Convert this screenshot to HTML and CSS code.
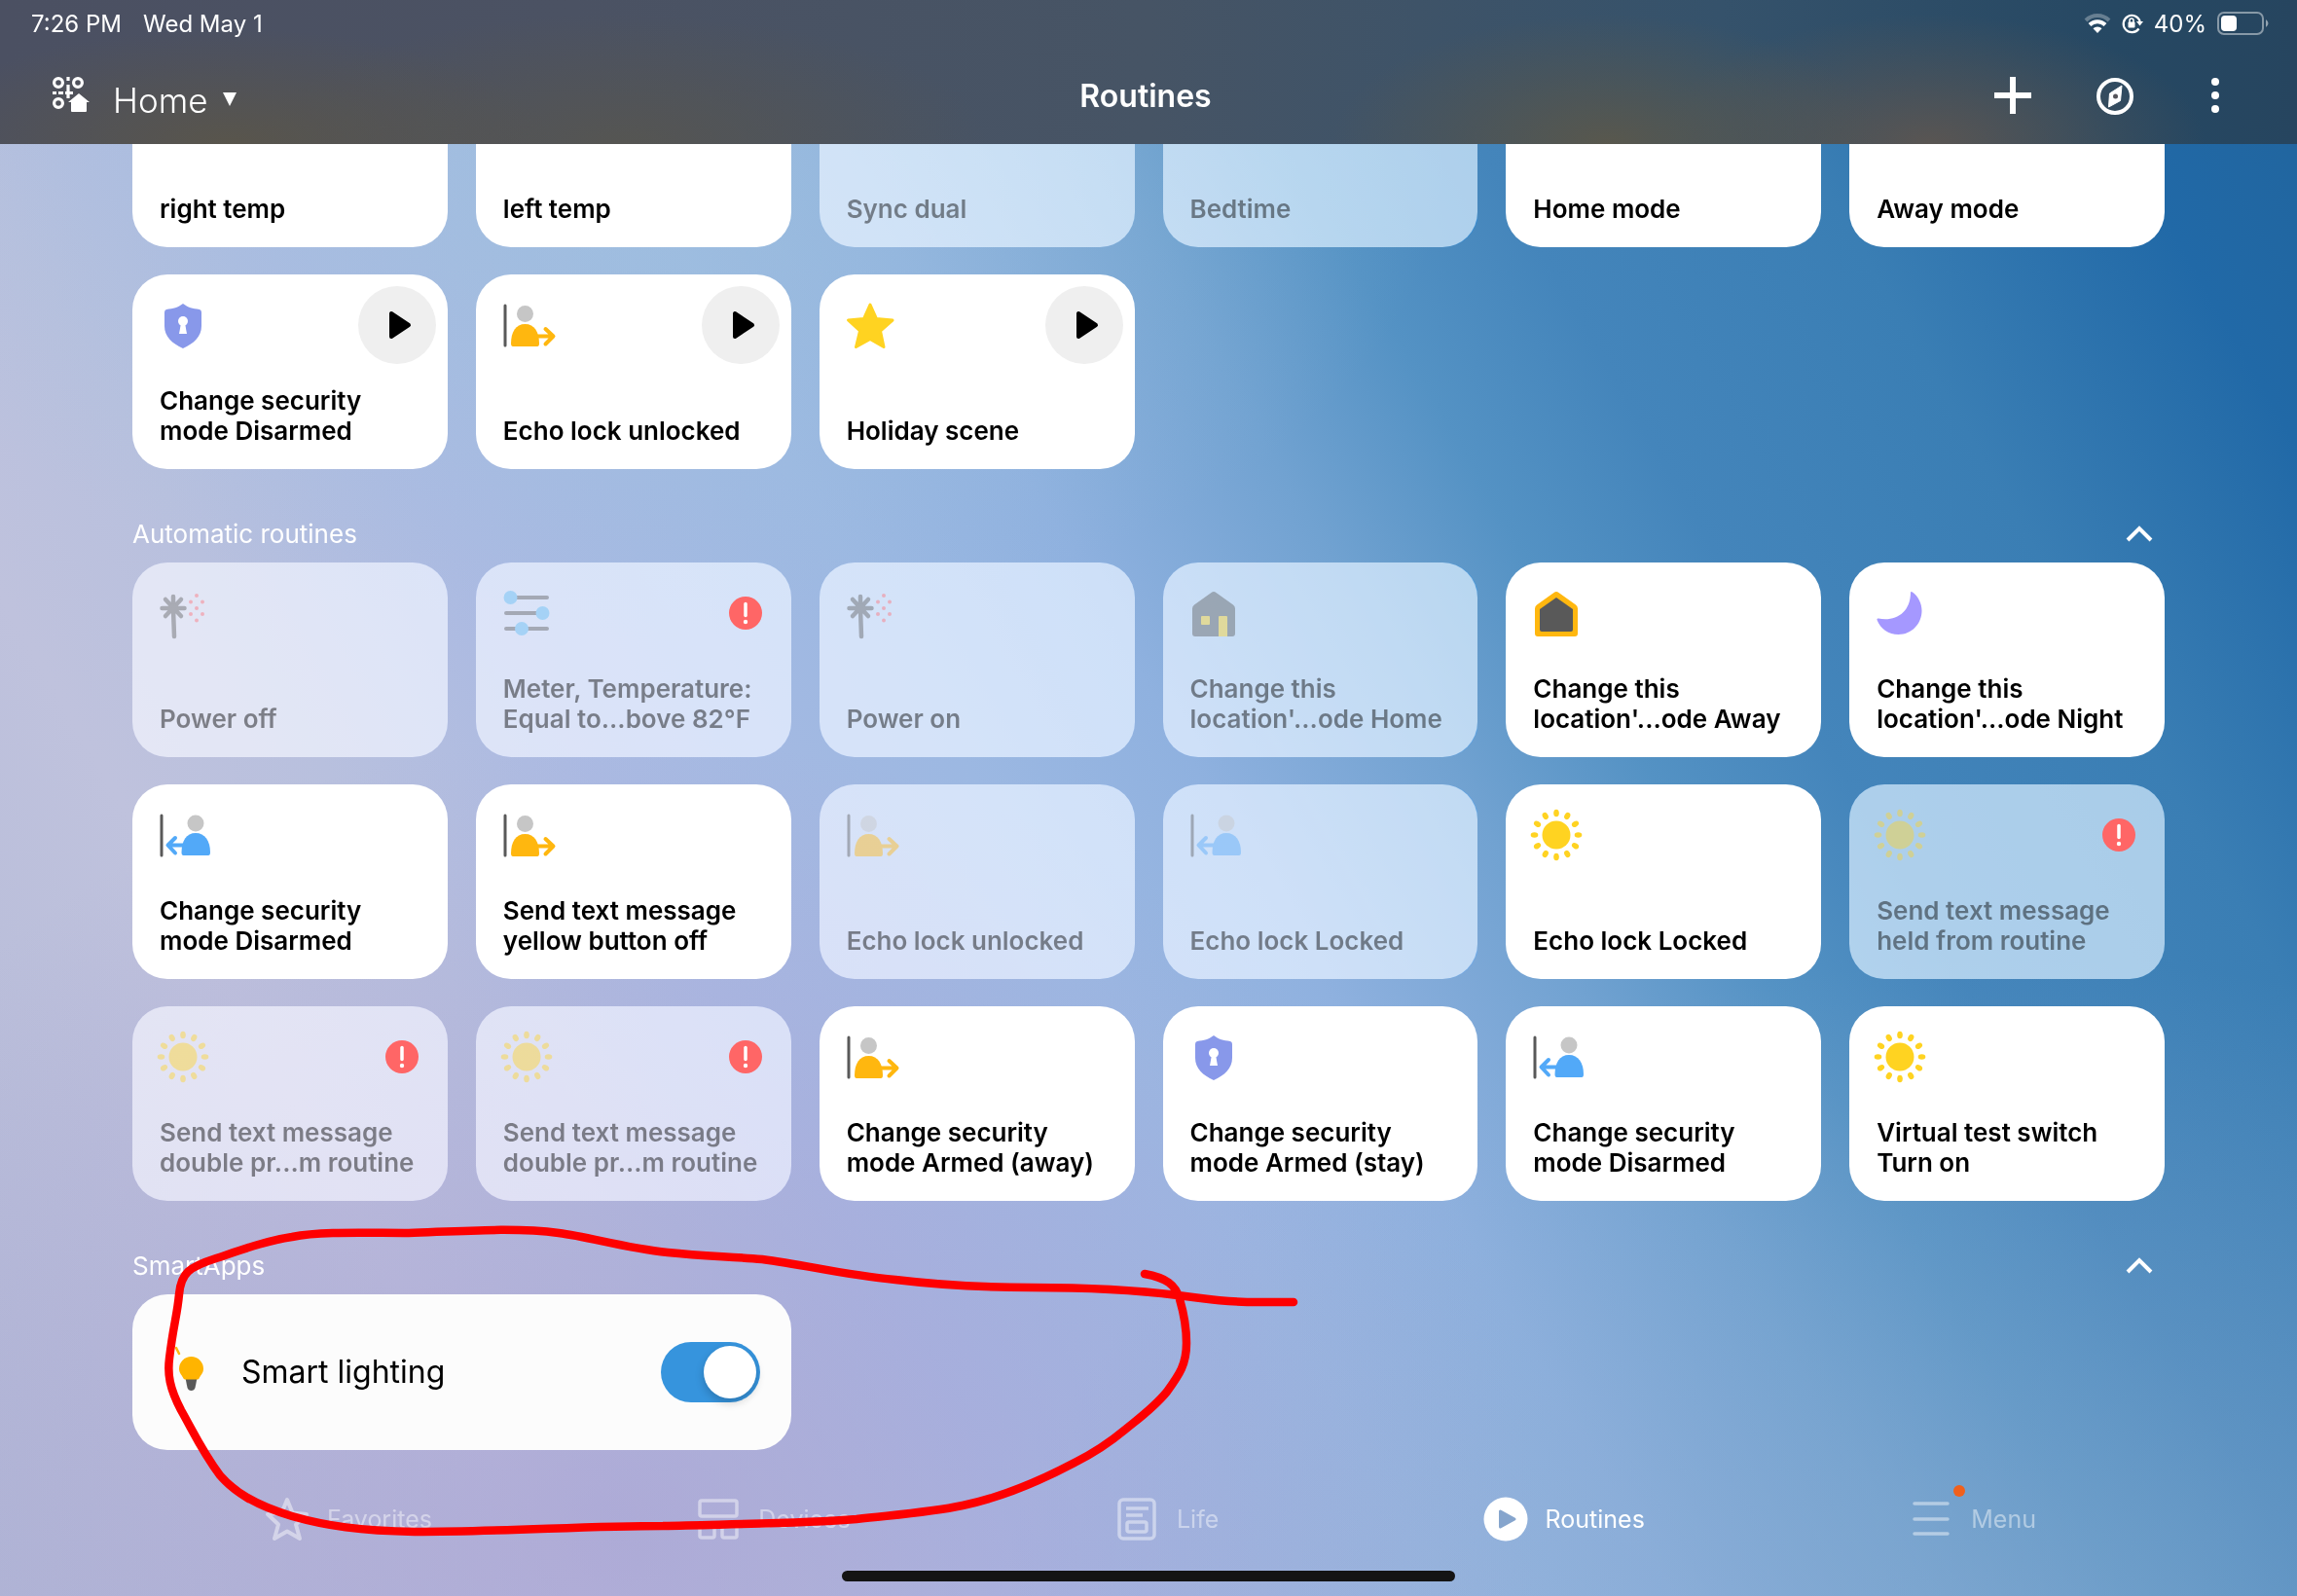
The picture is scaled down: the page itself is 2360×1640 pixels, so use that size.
FILE: index.html
```html
<!DOCTYPE html>
<html lang="en">
<head>
<meta charset="utf-8">
<meta name="viewport" content="width=device-width, initial-scale=1">
<title>Routines</title>
<link rel="stylesheet" href="styles.css">
</head>
<body>
<svg class="sprite" aria-hidden="true">
  <symbol id="i-play" viewBox="0 0 24 30"><path d="M3 3v24l18-12z" fill="currentColor" stroke="currentColor" stroke-width="4" stroke-linejoin="round"/></symbol>
  <symbol id="i-shield" viewBox="0 0 48 48"><path d="M24 2c5 4 10 5 17 6q2 .5 2 3v14c0 11-8 18-19 23C13 43 5 36 5 25V11q0-2.500 2-3c7-1 12-2 17-6z" fill="#8898ea"/><circle cx="24" cy="20" r="5" fill="#fff"/><path d="M22 22h4l2 11h-8z" fill="#fff"/></symbol>
  <symbol id="i-leave" viewBox="0 0 48 48"><path d="M2 4v41" stroke="#595959" stroke-width="3" stroke-linecap="round"/><circle cx="22.500" cy="12.500" r="8.500" fill="#c6c6c6"/><path d="M8 43c0-12 5-20 14.500-20S37 31 37 43q0 3-2 3H10q-2 0-2-3z" fill="#ffb70f"/><path d="M34 35.500h17M43.500 28l8 7.500-8 8" fill="none" stroke="#ffb70f" stroke-width="4" stroke-linecap="round" stroke-linejoin="round"/></symbol>
  <symbol id="i-arrive" viewBox="0 0 48 48"><path d="M2 4v41" stroke="#595959" stroke-width="3" stroke-linecap="round"/><circle cx="37" cy="12" r="8.500" fill="#c6c6c6"/><path d="M22.500 42c0-12 5-20 14.500-20s15 8 15 20q0 3-2 3H24.500q-2 0-2-3z" fill="#52a9f8"/><path d="M26 34.500H9M16 27l-7.500 7.500L16 42.500" fill="none" stroke="#52a9f8" stroke-width="4" stroke-linecap="round" stroke-linejoin="round"/></symbol>
  <symbol id="i-star" viewBox="0 0 48 48"><path d="M24 3l6.500 14.500L47 19 34.500 30 38 46.500 24 38.500 9.500 46.500 13.500 30 1.500 19l16-1.500z" fill="#ffd321" stroke="#ffd321" stroke-width="3" stroke-linejoin="round"/></symbol>
  <symbol id="i-sun" viewBox="0 0 48 48"><g fill="#ffd321"><circle cx="24" cy="24" r="14.500"/><ellipse cx="24" cy="1.500" rx="2.800" ry="3.800"/><ellipse cx="24" cy="1.500" rx="2.800" ry="3.800" transform="rotate(30 24 24)"/><ellipse cx="24" cy="1.500" rx="2.800" ry="3.800" transform="rotate(60 24 24)"/><ellipse cx="24" cy="1.500" rx="2.800" ry="3.800" transform="rotate(90 24 24)"/><ellipse cx="24" cy="1.500" rx="2.800" ry="3.800" transform="rotate(120 24 24)"/><ellipse cx="24" cy="1.500" rx="2.800" ry="3.800" transform="rotate(150 24 24)"/><ellipse cx="24" cy="1.500" rx="2.800" ry="3.800" transform="rotate(180 24 24)"/><ellipse cx="24" cy="1.500" rx="2.800" ry="3.800" transform="rotate(210 24 24)"/><ellipse cx="24" cy="1.500" rx="2.800" ry="3.800" transform="rotate(240 24 24)"/><ellipse cx="24" cy="1.500" rx="2.800" ry="3.800" transform="rotate(270 24 24)"/><ellipse cx="24" cy="1.500" rx="2.800" ry="3.800" transform="rotate(300 24 24)"/><ellipse cx="24" cy="1.500" rx="2.800" ry="3.800" transform="rotate(330 24 24)"/></g></symbol>
  <symbol id="i-burst" viewBox="0 0 48 48"><path d="M14 7v17M2.500 19h23M6 10l16 17M22 10L6 27M14 20l1 28" fill="none" stroke="#595959" stroke-width="4.500" stroke-linecap="round"/><circle cx="14" cy="19" r="5" fill="#595959"/><g fill="#ff6b73"><circle cx="38" cy="6" r="2"/><circle cx="32" cy="12.500" r="2"/><circle cx="44" cy="12.500" r="2"/><circle cx="38" cy="19" r="2"/><circle cx="32" cy="25" r="2"/><circle cx="44" cy="25" r="2"/><circle cx="38" cy="31.500" r="2"/></g></symbol>
  <symbol id="i-sliders" viewBox="0 0 48 48"><path d="M10 8h35M3 24h42M3 40h42" stroke="#595959" stroke-width="4" stroke-linecap="round"/><g fill="#5cbcf4"><circle cx="7.500" cy="8" r="7"/><circle cx="40.500" cy="24" r="7"/><circle cx="19" cy="40" r="7"/></g></symbol>
  <symbol id="i-house" viewBox="0 0 48 48"><path d="M21.500 3Q24 1 26.500 3L44 15.500q2 1.500 2 4V45q0 3-3 3H5q-3 0-3-3V19.500q0-2.500 2-4z" fill="#595959"/><rect x="11" y="27" width="9" height="9" rx="1" fill="#ffd321"/><path d="M29 48V28q0-1 1-1h7q1 0 1 1v20z" fill="#ffd321"/></symbol>
  <symbol id="i-away" viewBox="0 0 48 48"><path d="M21.500 3Q24 1 26.500 3L44 15.500q2 1.500 2 4V45q0 3-3 3H5q-3 0-3-3V19.500q0-2.500 2-4z" fill="#ffb70f"/><path d="M24 8l17 12v21q0 2-2 2H9q-2 0-2-2V20z" fill="#595959"/></symbol>
  <symbol id="i-moon" viewBox="0 0 48 48"><path d="M35 2.500q.5-1 2 0C43 7 46.500 14 46.500 21.500 46.500 35 36 46 22.500 46 12.500 46 4 40 .5 31q-.5-2 1.500-1.500C19 33 35 24 35 2.500z" fill="#a598ff"/></symbol>
  <symbol id="i-alert" viewBox="0 0 34 34"><circle cx="17" cy="17" r="17" fill="#ff6666"/><path d="M17 7.500v12" stroke="#fff" stroke-width="3.500" stroke-linecap="round"/><circle cx="17" cy="26" r="2.200" fill="#fff"/></symbol>
  <symbol id="i-chevron" viewBox="0 0 28 18"><path d="M2 15L14 3l12 12" fill="none" stroke="#fff" stroke-width="4"/></symbol>
</svg>

<div class="page">
  <header class="top">
    <div class="status">
      <div class="status-group"><span>7:26 PM</span><span>Wed May 1</span></div>
      <div class="status-side">
        <svg class="wifi" viewBox="0 0 28 20" aria-label="Wi-Fi"><path d="M2 7a17 17 0 0 1 24 0" fill="none" stroke="#fff" stroke-opacity=".3" stroke-width="4"/><path d="M6 11.500a11.500 11.500 0 0 1 16 0" fill="none" stroke="#fff" stroke-width="4"/><path d="M14 20l-4.500-4.800a6.500 6.500 0 0 1 9 0z" fill="#fff"/></svg>
        <svg class="lock" viewBox="0 0 22 22" aria-label="Rotation lock"><path d="M17.500 16.500A8.700 8.700 0 1 1 18.700 9" fill="none" stroke="#fff" stroke-width="2.200"/><path d="M15 9h7l-3.500 4.500z" fill="#fff"/><rect x="6.500" y="9.500" width="7" height="6" rx="1" fill="#fff"/><path d="M8 10V8a2 2 0 0 1 4 0v2" fill="none" stroke="#fff" stroke-width="1.500"/></svg>
        <span>40%</span>
        <svg class="battery" viewBox="0 0 54 24" aria-label="Battery"><rect x="1" y="1" width="46" height="22" rx="6" fill="none" stroke="#fff" stroke-opacity=".45" stroke-width="2"/><rect x="4" y="4" width="16" height="16" rx="4" fill="#fff"/><path d="M50 8q5 4 0 8z" fill="#fff" fill-opacity=".5"/></svg>
      </div>
    </div>
    <div class="toolbar">
      <button class="place" type="button">
        <svg class="place-icon" viewBox="0 0 38 38" aria-hidden="true"><g fill="none" stroke="#fff" stroke-width="3.200"><circle cx="6" cy="6" r="4.400"/><circle cx="26" cy="6" r="4.400"/><circle cx="6" cy="27" r="4.400"/><path d="M16 0v4M16 8v7M0 16.500h4M6 16.500h5M13 16.500h8M16 17v5"/></g><path d="M27 17l11 9h-3v9q0 1-1 1H20q-1 0-1-1v-9h-3z" fill="#fff"/></svg>
        <span>Home</span>
        <svg class="caret" viewBox="0 0 14 14" aria-hidden="true"><path d="M0 0h14L7 14z" fill="#fff"/></svg>
      </button>
      <h1 class="title">Routines</h1>
      <div class="actions">
        <button class="action" type="button" aria-label="Add"><svg viewBox="0 0 48 48"><path d="M24 5v38M5 24h38" stroke="#fff" stroke-width="6"/></svg></button>
        <button class="action" type="button" aria-label="Discover"><svg viewBox="0 0 48 48"><circle cx="25" cy="25" r="17" fill="none" stroke="#fff" stroke-width="4"/><path d="M32 14l-1.500 15.500L18.500 36 19.500 22z" fill="#fff" stroke="#fff" stroke-linejoin="round"/><circle cx="25.500" cy="25" r="2.500" fill="#55545a"/></svg></button>
        <button class="action" type="button" aria-label="More options"><svg viewBox="0 0 48 48"><g fill="#fff"><circle cx="24" cy="10" r="4"/><circle cx="24" cy="24" r="4"/><circle cx="24" cy="38" r="4"/></g></svg></button>
      </div>
    </div>
  </header>

  <main class="content">
    <ul class="grid">
      <li class="card"><p class="name">right temp</p></li>
      <li class="card"><p class="name">left temp</p></li>
      <li class="card off"><p class="name">Sync dual</p></li>
      <li class="card off"><p class="name">Bedtime</p></li>
      <li class="card"><p class="name">Home mode</p></li>
      <li class="card"><p class="name">Away mode</p></li>
      <li class="card"><div class="card-top"><svg class="icon"><use href="#i-shield"/></svg><button class="play" type="button" aria-label="Run"><svg><use href="#i-play"/></svg></button></div><p class="name">Change security<br>mode Disarmed</p></li>
      <li class="card"><div class="card-top"><svg class="icon"><use href="#i-leave"/></svg><button class="play" type="button" aria-label="Run"><svg><use href="#i-play"/></svg></button></div><p class="name">Echo lock unlocked</p></li>
      <li class="card"><div class="card-top"><svg class="icon"><use href="#i-star"/></svg><button class="play" type="button" aria-label="Run"><svg><use href="#i-play"/></svg></button></div><p class="name">Holiday scene</p></li>
    </ul>

    <div class="section-head">
      <h2>Automatic routines</h2>
      <button class="fold" type="button" aria-label="Collapse automatic routines"><svg><use href="#i-chevron"/></svg></button>
    </div>
    <ul class="grid">
      <li class="card off"><div class="card-top"><svg class="icon"><use href="#i-burst"/></svg></div><p class="name">Power off</p></li>
      <li class="card off"><div class="card-top"><svg class="icon"><use href="#i-sliders"/></svg><svg class="alert"><use href="#i-alert"/></svg></div><p class="name">Meter, Temperature:<br>Equal to...bove 82°F</p></li>
      <li class="card off"><div class="card-top"><svg class="icon"><use href="#i-burst"/></svg></div><p class="name">Power on</p></li>
      <li class="card off"><div class="card-top"><svg class="icon"><use href="#i-house"/></svg></div><p class="name">Change this<br>location'...ode Home</p></li>
      <li class="card"><div class="card-top"><svg class="icon"><use href="#i-away"/></svg></div><p class="name">Change this<br>location'...ode Away</p></li>
      <li class="card"><div class="card-top"><svg class="icon"><use href="#i-moon"/></svg></div><p class="name">Change this<br>location'...ode Night</p></li>

      <li class="card"><div class="card-top"><svg class="icon"><use href="#i-arrive"/></svg></div><p class="name">Change security<br>mode Disarmed</p></li>
      <li class="card"><div class="card-top"><svg class="icon"><use href="#i-leave"/></svg></div><p class="name">Send text message<br>yellow button off</p></li>
      <li class="card off"><div class="card-top"><svg class="icon"><use href="#i-leave"/></svg></div><p class="name">Echo lock unlocked</p></li>
      <li class="card off"><div class="card-top"><svg class="icon"><use href="#i-arrive"/></svg></div><p class="name">Echo lock Locked</p></li>
      <li class="card"><div class="card-top"><svg class="icon"><use href="#i-sun"/></svg></div><p class="name">Echo lock Locked</p></li>
      <li class="card off"><div class="card-top"><svg class="icon"><use href="#i-sun"/></svg><svg class="alert"><use href="#i-alert"/></svg></div><p class="name">Send text message<br>held from routine</p></li>

      <li class="card off"><div class="card-top"><svg class="icon"><use href="#i-sun"/></svg><svg class="alert"><use href="#i-alert"/></svg></div><p class="name">Send text message<br>double pr...m routine</p></li>
      <li class="card off"><div class="card-top"><svg class="icon"><use href="#i-sun"/></svg><svg class="alert"><use href="#i-alert"/></svg></div><p class="name">Send text message<br>double pr...m routine</p></li>
      <li class="card"><div class="card-top"><svg class="icon"><use href="#i-leave"/></svg></div><p class="name">Change security<br>mode Armed (away)</p></li>
      <li class="card"><div class="card-top"><svg class="icon"><use href="#i-shield"/></svg></div><p class="name">Change security<br>mode Armed (stay)</p></li>
      <li class="card"><div class="card-top"><svg class="icon"><use href="#i-arrive"/></svg></div><p class="name">Change security<br>mode Disarmed</p></li>
      <li class="card"><div class="card-top"><svg class="icon"><use href="#i-sun"/></svg></div><p class="name">Virtual test switch<br>Turn on</p></li>
    </ul>

    <div class="section-head">
      <h2>SmartApps</h2>
      <button class="fold" type="button" aria-label="Collapse SmartApps"><svg><use href="#i-chevron"/></svg></button>
    </div>
    <div class="grid">
      <div class="app">
        <svg class="bulb" viewBox="0 0 48 48" aria-hidden="true"><path d="M12 5l-3-6" stroke="#ffb70f" stroke-width="2.500" stroke-linecap="round"/><path d="M18.500 30h12l-2 10q-1 3-4 3t-4-3z" fill="#595959"/><path d="M24.500 8A12.500 12.500 0 0 1 37 20.500c0 5-3.500 7-4.500 10q-.5 1-2 1h-12q-1.500 0-2-1c-1-3-4.500-5-4.500-10A12.500 12.500 0 0 1 24.500 8z" fill="#ffb400"/></svg>
        <label class="app-name" for="smart-lighting">Smart lighting</label>
        <input class="switch" type="checkbox" role="switch" id="smart-lighting" checked>
      </div>
    </div>
  </main>

  <nav class="tabs" aria-label="Main">
    <a class="tab" href="#favorites"><svg viewBox="0 0 46 46"><path d="M23 3l5.500 13.500L43 18 32 28.500 36 43 23 35.500 10 43l4-14.500L3 18l14.500-1.500z" fill="none" stroke="currentColor" stroke-width="4" stroke-linejoin="round"/></svg><span>Favorites</span></a>
    <a class="tab" href="#devices"><svg viewBox="0 0 46 46"><g fill="none" stroke="currentColor" stroke-width="3.500"><rect x="4" y="4" width="38" height="16" rx="2"/><rect x="4" y="27" width="15" height="15" rx="2"/><rect x="27" y="27" width="15" height="15" rx="2"/></g></svg><span>Devices</span></a>
    <a class="tab" href="#life"><svg viewBox="0 0 46 46"><g fill="none" stroke="currentColor" stroke-width="3.500"><rect x="5" y="3" width="36" height="40" rx="4"/><path d="M12 12h23M12 19h17"/><rect x="13" y="26" width="20" height="10" rx="2"/></g></svg><span>Life</span></a>
    <a class="tab current" href="#routines" aria-current="page"><svg viewBox="0 0 46 46"><circle cx="23" cy="23" r="22.500" fill="currentColor"/><path d="M17.500 15v16L32 23z" fill="#86a5cd" stroke="#86a5cd" stroke-width="3" stroke-linejoin="round"/></svg><span>Routines</span></a>
    <a class="tab" href="#menu"><svg viewBox="0 0 46 46"><path d="M6 7h34M6 23h34M6 38h34" stroke="currentColor" stroke-width="3.500" stroke-linecap="round"/></svg><span>Menu</span><i class="badge"></i></a>
  </nav>
  <div class="home-bar"></div>

  <svg class="ink" viewBox="0 0 2360 1640" aria-hidden="true"><path d="M1176 1309C1198 1313 1208 1320 1212 1335C1217 1352 1219 1365 1219 1380C1219 1402 1212 1412 1199 1430C1186 1446 1172 1456 1156 1469C1138 1484 1124 1493 1104 1503C1070 1521 1032 1538 989 1547C956 1554 925 1556 880 1561C820 1566 750 1566 681 1568C600 1568 520 1574 426 1574C370 1573 335 1568 300 1558C260 1546 240 1532 226 1516C208 1492 200 1474 186 1449C174 1426 172 1412 174 1396C178 1362 182 1352 184 1330C186 1308 194 1302 222 1293C252 1283 274 1275 300 1271C330 1265 375 1267 420 1267C475 1265 530 1261 574 1267C606 1271 640 1282 686 1287C725 1291 750 1291 783 1294C830 1300 865 1310 920 1315C970 1321 1010 1323 1060 1323C1130 1323 1170 1326 1210 1331C1240 1335 1260 1338 1293 1338L1329 1338" fill="none" stroke="#fe0000" stroke-width="8.500" stroke-linecap="round" stroke-linejoin="round"/></svg>
</div>
</body>
</html>
```

FILE: styles.css
```css
* { box-sizing: border-box; }

body {
  margin: 0;
  font-family: Inter, "Liberation Sans", sans-serif;
  font-size: 26px;
  line-height: 31px;
  color: #000;
}

h1, h2, p, ul { margin: 0; padding: 0; font-size: inherit; }
ul { list-style: none; }
svg { display: block; overflow: visible; }
symbol { overflow: visible; }
.sprite { position: absolute; width: 0; height: 0; }

button {
  padding: 0;
  border: 0;
  background: none;
  color: inherit;
  font: inherit;
}

.page {
  position: relative;
  display: flex;
  flex-direction: column;
  min-height: 100vh;
  overflow: hidden;
  background:
    radial-gradient(ellipse 40% 50% at 27% 96%, rgba(158, 148, 208, .5), rgba(158, 148, 208, 0)),
    radial-gradient(ellipse 45% 45% at 88% 105%, rgba(132, 168, 206, .65), rgba(132, 168, 206, 0)),
    radial-gradient(ellipse 35% 30% at 28% 10%, rgba(160, 196, 220, .5), rgba(160, 196, 220, 0)),
    linear-gradient(60deg, #b3b9d6 0%, #bfc2dd 18%, #b8c0de 25%, #abbae2 33%, #9cb8e2 45%, #8fb1df 52%, #71a2d1 60%, #5492c4 66%, #4485bb 72%, #3a7eb4 82%, #2169a7 92%, #21649c 100%);
}

/* Header */
.top {
  position: relative;
  z-index: 1;
  color: #fff;
  background:
    radial-gradient(ellipse 14% 80% at 10% 100%, rgba(92, 86, 70, .8), rgba(92, 86, 70, 0)),
    radial-gradient(ellipse 16% 90% at 27% 100%, rgba(88, 86, 78, .8), rgba(88, 86, 78, 0)),
    radial-gradient(ellipse 12% 90% at 70% 100%, rgba(92, 88, 74, .9), rgba(92, 88, 74, 0)),
    radial-gradient(ellipse 12% 90% at 84% 100%, rgba(94, 86, 80, .9), rgba(94, 86, 80, 0)),
    linear-gradient(90deg, #4b5062 0%, #4b5263 25%, #465465 50%, #35526b 75%, #264863 92%, #26455f 100%);
}
.status {
  display: flex;
  justify-content: space-between;
  align-items: center;
  height: 48px;
  padding: 0 28px 0 32px;
  font-size: 24px;
}
.status-group { display: flex; gap: 22px; }
.status-side { display: flex; align-items: center; gap: 11px; }
.wifi { width: 28px; height: 20px; }
.lock { width: 22px; height: 22px; }
.battery { width: 54px; height: 24px; }

.toolbar {
  display: grid;
  grid-template-columns: 1fr auto 1fr;
  align-items: center;
  height: 100px;
  padding: 0 60px 0 54px;
}
.place {
  display: flex;
  align-items: center;
  gap: 16px;
  justify-self: start;
  font-size: 35px;
  font-weight: 300;
}
.place-icon { width: 38px; height: 38px; margin-right: 8px; }
.place span { padding-top: 10px; }
.caret { width: 14px; height: 14px; margin-top: 8px; }
.title { font-size: 32px; font-weight: 600; }
.actions { display: flex; justify-content: flex-end; gap: 56px; }
.action svg { width: 48px; height: 48px; }

/* The list is scrolled, so its first row sits partly under the header */
.content {
  margin-top: -94px;
  padding: 0 136px;
}

.grid {
  display: grid;
  grid-template-columns: repeat(6, 1fr);
  gap: 28px 29px;
}

.card {
  display: flex;
  flex-direction: column;
  justify-content: space-between;
  min-height: 200px;
  padding: 28px 12px 24px 28px;
  border-radius: 36px;
  background: #fff;
}
.card > .name:only-child { margin-top: auto; }
.card-top {
  display: flex;
  align-items: center;
  justify-content: space-between;
  height: 48px;
}
.icon { width: 48px; height: 48px; }
.name { font-weight: 600; white-space: nowrap; }

.off {
  background: rgba(255, 255, 255, .6);
  backdrop-filter: saturate(1.3);
}
.off .icon { opacity: .42; }
.off .name { color: rgba(0, 0, 0, .45); }

.play {
  display: grid;
  place-items: center;
  width: 80px;
  height: 80px;
  padding-left: 6px;
  border-radius: 50%;
  background: #efefef;
}
.play svg { width: 24px; height: 30px; }
.alert { width: 34px; height: 34px; margin-right: 18px; }

.section-head {
  display: flex;
  align-items: center;
  justify-content: space-between;
  padding: 50px 12px 12px 0;
  color: #fff;
}
.section-head h2 { font-weight: 400; line-height: 34px; }
.fold svg { width: 28px; height: 18px; }

.app {
  grid-column: span 2;
  display: flex;
  align-items: center;
  min-height: 160px;
  padding: 0 32px 0 36px;
  border-radius: 36px;
  background: #fcfcfc;
}
.bulb { width: 48px; height: 48px; }
.app-name { flex: 1; margin-left: 28px; font-size: 32px; line-height: 40px; }
.switch {
  appearance: none;
  width: 102px;
  height: 62px;
  margin: 0;
  padding: 4px;
  border-radius: 31px;
  background: #b9bcc4;
}
.switch::before {
  content: "";
  display: block;
  width: 54px;
  height: 54px;
  border-radius: 50%;
  background: #fff;
  box-shadow: 0 4px 10px rgba(0, 0, 0, .2);
}
.switch:checked { background: #3694dd; }
.switch:checked::before { margin-left: auto; }

/* Bottom navigation */
.tabs {
  display: flex;
  justify-content: space-between;
  padding: 48px 268px 30px 272px;
}
.tab {
  position: relative;
  display: flex;
  align-items: center;
  gap: 18px;
  color: rgba(255, 255, 255, .45);
  font-size: 25px;
  text-decoration: none;
}
.tab svg { width: 46px; height: 46px; }
.tab.current { color: #fff; }
.badge {
  position: absolute;
  top: -12px;
  left: 46px;
  width: 12px;
  height: 12px;
  border-radius: 50%;
  background: #f0601c;
}
.home-bar {
  width: 630px;
  height: 11px;
  margin: 0 auto 15px;
  border-radius: 6px;
  background: #141414;
}

/* Hand-drawn mark over the page */
.ink {
  position: absolute;
  top: 0;
  left: 0;
  z-index: 2;
  width: 100%;
  pointer-events: none;
}
```
